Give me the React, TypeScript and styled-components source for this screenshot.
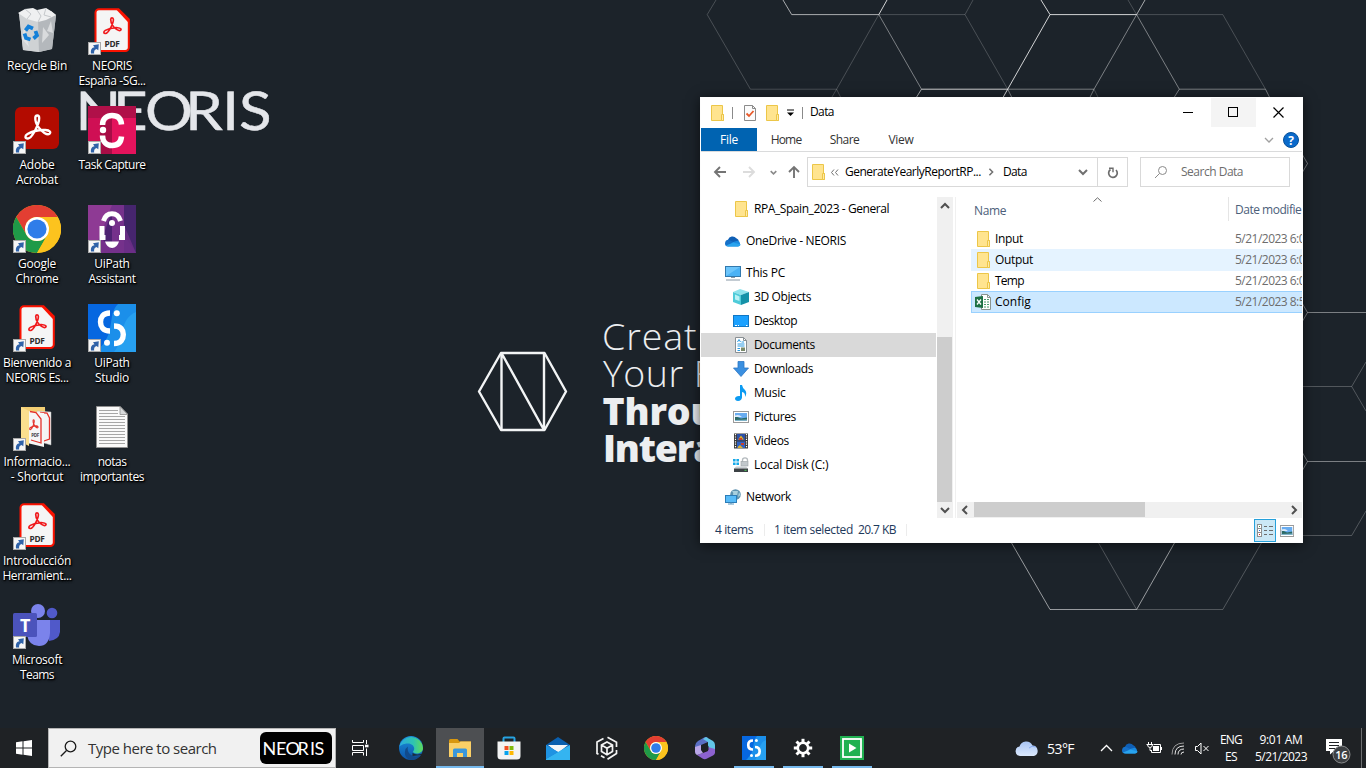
import React from "react";
import styled, { createGlobalStyle, css } from "styled-components";

/* ---------- base ---------- */

const GlobalStyle = createGlobalStyle`
  * { box-sizing: border-box; }
  body { margin: 0; background: #1c232a; overflow: hidden; }
  svg { display: block; flex: none; }
`;

const Screen = styled.main`
  position: relative;
  display: flex;
  flex-direction: column;
  justify-content: space-between;
  width: 1366px;
  height: 768px;
  overflow: hidden;
  background: #1c232a;
  font-family: "Open Sans", "Noto Sans", sans-serif;
  font-size: 12px;
  line-height: 15px;
  letter-spacing: -0.36px;
  color: #000;
`;

const Text = styled.span<{ $ls?: number }>`
  white-space: nowrap;
  letter-spacing: ${(p) => p.$ls ?? -0.38}px;
`;

/* ---------- wallpaper ---------- */

const WallpaperArt = styled.svg`
  position: absolute;
  inset: 0;
`;

const wallpaperLines: { d: string; o: number }[] = [
  { o: 0.2, d: "M716 0 707.2 14.6 750.4 89.2H836.6L878.8 14.6M973 0 965 14.6 1007.7 89.2M1128 0 1136.6 14.6H1222.8L1265.5 89.2M836.6 89.2l4 8M1094 89.2l4 8M878.8 14.6H965M836.6 89.2 832 97" },
  { o: 0.42, d: "M878.8 14.6 921.5 89.2M1136.6 14.6 1094 89.2M1136.6 14.6 1179.3 89.2M1007.7 89.2H1094M1179.3 89.2H1265.5l4 8M1007.7 89.2l4 8M1179.3 89.2l-5 8M1094 89.2l-4 8" },
  { o: 0.62, d: "M783 0 791.7 14.6H878.8M1145 0 1136.6 14.6M921.5 89.2l-5 8" },
  { o: 0.8, d: "M887 0 878.8 14.6M1041 0 1050 14.6H1136.6M1050 14.6 1007.7 89.2H921.5M1007.7 89.2l-4.500 8" },
  { o: 0.42, d: "M1302 154 1307.500 163.500 1302 173M1302 303 1307.500 312.500H1366M1307.500 312.500 1302 322M1302 452 1307.500 461.500H1366M1307.500 461.500 1302 471" },
  { o: 0.24, d: "M1302 386.500H1351.700L1366 362M1351.700 386.500 1366 411M1302 535.500H1351.700L1366 511M1098 542 1136.600 609.500M1262 542 1222.800 609.500H1136.600" },
  { o: 0.55, d: "M1011 542 1050 609.500H1136.600L1175 542" },
];

const Wallpaper = () => (
  <WallpaperArt width="1366" height="768" viewBox="0 0 1366 768">
    <g fill="none" stroke="#fff" strokeWidth="1">
      {wallpaperLines.map((l, i) => (
        <path key={i} d={l.d} strokeOpacity={l.o} />
      ))}
    </g>
    <g fill="none" stroke="#f2f4f5" strokeWidth="2.400" strokeLinejoin="round">
      <path d="M501 353H544.500L566 391.500 544.500 430H501L479 391.500Z" />
      <path d="M501.500 353V430M544 353V430M501.500 353 544 430" />
    </g>
    <g fill="#e4e6ea" stroke="#e4e6ea" strokeWidth=".5" fontFamily="Lato, sans-serif" fontSize="53.500" transform="scale(1.120 1)">
      <text y="130" x="67.500 101 129.500 165.500 198.500 213.500" textRendering="geometricPrecision">NEORIS</text>
    </g>
    <g fill="#eceef0" fontFamily="'Open Sans', sans-serif" fontSize="37.500">
      <text x="602" y="349.500" fontWeight="300" letterSpacing="0.900">Creat</text>
      <text x="603" y="386.500" fontWeight="300" letterSpacing="0.500">Your F</text>
      <text x="602.500" y="424.500" fontWeight="800" letterSpacing="-0.200">Throu</text>
      <text x="603" y="461.500" fontWeight="800" letterSpacing="-1.200">Intera</text>
    </g>
  </WallpaperArt>
);

/* ---------- desktop icons ---------- */

const IconGrid = styled.section`
  position: relative;
  display: grid;
  grid-auto-flow: column;
  grid-template-rows: repeat(7, 99px);
  grid-auto-columns: 74px;
  column-gap: 1px;
  width: 160px;
  padding-top: 7px;
`;

const Shortcut = styled.div`
  display: flex;
  flex-direction: column;
  align-items: center;
  gap: 3px;
`;

const Picture = styled.div`
  position: relative;
  width: 48px;
  height: 48px;
`;

const ArrowBadge = styled.svg`
  position: absolute;
  left: 0;
  bottom: 0;
`;

const Caption = styled.div`
  display: flex;
  flex-direction: column;
  align-items: center;
  color: #fff;
  text-shadow: 1px 1px 1px #000, 0 1px 2px #000, 1px 1px 3px rgba(0, 0, 0, 0.8);
`;

const Trefoil = ({ color, width }: { color: string; width: number }) => (
  <g fill="none" stroke={color} strokeWidth={width} strokeLinejoin="round" strokeLinecap="round">
    <path d="M3.800 21.200C1 21.300 1 18.700 3.400 17.300C8 14.800 13.500 13.700 18.500 14C22.500 14.300 23.500 16 22 17.200C20 18.700 15.500 15.500 13 12C10.800 9 9.800 6 10 3.500C10.300 1 13.200 1 13.300 3.800C13.400 7 11.500 11.200 9.600 14.800C7.500 18.600 5.400 21.100 3.800 21.200Z" />
  </g>
);

const PdfIcon = () => (
  <svg width="48" height="48">
    <path d="M11 2.200H30.500L40.800 12.500V40.500a3.500 3.500 0 0 1-3.500 3.500H11a3.500 3.500 0 0 1-3.500-3.500V5.700a3.500 3.500 0 0 1 3.500-3.500Z" fill="#f5f5f5" stroke="#fa1200" strokeWidth="2" />
    <path d="M30 2.200 40.800 13V16L28 2.200Z" fill="#fa1200" />
    <g transform="translate(14.500 9.500) scale(.82 .8)">
      <Trefoil color="#f0191c" width={2} />
    </g>
    <text x="24" y="39.500" fontFamily="Open Sans" fontWeight="700" fontSize="9.500" textLength="15" lengthAdjust="spacingAndGlyphs" textAnchor="middle" fill="#2c2c2c">PDF</text>
  </svg>
);

const AcrobatIcon = () => (
  <svg width="48" height="48">
    <rect x="2" y="1" width="44" height="42" rx="6" fill="#b30b00" />
    <g transform="translate(10.500 7.500) scale(1.180 1.180)">
      <Trefoil color="#fff" width={2} />
    </g>
  </svg>
);

const RecycleIcon = () => (
  <svg width="48" height="48">
    <path d="M6 6 10 43 26 45 39 42 43 8 38 4 10 4Z" fill="#c9cccf" />
    <path d="M6 6 10 43 26 45 25 10Z" fill="#cfd2d4" />
    <path d="M25 10 26 45 39 42 43 8Z" fill="#b4b8bc" />
    <path d="M5 6 12 2 20 1 24 3 33 1 38 4 43 8 33 13 25 15 14 12Z" fill="#eff0f1" />
    <path d="M12 2 18 7 14 12M24 3 28 9 25 15M33 1 31 8 38 10" stroke="#c5c8cb" fill="none" />
    <path d="M11 20 9 32 16 40ZM30 20 36 28 29 36ZM38 14 34 24 40 26Z" fill="#e8eaeb" opacity=".7" />
    <g fill="none" stroke="#1480d8" strokeWidth="3.800">
      <path d="M12.500 23.500 15.500 19.500 20 21.500" />
      <path d="M22.500 24 24 28.500 20.500 31.500" />
      <path d="M17.500 32.500 13 31 11.500 26.500" />
    </g>
  </svg>
);

const ChromeIcon = ({ size }: { size: number }) => (
  <svg width={size} height={size} viewBox="0 0 48 48">
    <circle cx="24" cy="24" r="24" fill="#fbbd0b" />
    <path d="M3.200 12A24 24 0 0 1 44.800 12H24A12 12 0 0 0 13.600 30Z" fill="#e33e32" />
    <path d="M3.200 12 13.600 30A12 12 0 0 0 34.400 30L24 48A24 24 0 0 1 3.200 12Z" fill="#1f9a48" />
    <path d="M34.400 30 24 48A24 24 0 0 0 44.800 12H24A12 12 0 0 1 34.400 30Z" fill="#fcc31e" />
    <circle cx="24" cy="24" r="12" fill="#fff" />
    <circle cx="24" cy="24" r="9.600" fill="#2f7de9" />
  </svg>
);

const TaskCaptureIcon = () => (
  <svg width="48" height="48">
    <rect width="48" height="48" fill="#e4135c" />
    <path d="M0 12H24V48H0Z" fill="#cf0f54" />
    <path d="M24 12 12 20V48H24Z" fill="#a80d46" />
    <rect width="48" height="12" fill="#b01049" />
    <g fill="none" stroke="#fff" strokeWidth="5.500">
      <path d="M14.500 19C14.500 12.500 19 9.500 24 9.500S33 12 33.500 18.500" />
      <path d="M14.500 29.500C14.500 36 19 39.500 24 39.500S33 37 33.500 30.500" />
    </g>
    <circle cx="15" cy="24" r="3.200" fill="#fff" />
  </svg>
);

const AssistantIcon = () => (
  <svg width="48" height="48">
    <rect width="48" height="48" fill="#8e3a94" />
    <path d="M36 0H48V48H36Z" fill="#5a2b80" />
    <path d="M48 0V48L36 30V0Z" fill="#3d2466" opacity=".7" />
    <path d="M24 0 10 36V48H48L36 20V0Z" fill="#6f2f88" opacity=".8" />
    <path d="M24 6 14 34 24 44Z" fill="#4d2272" />
    <g fill="none" stroke="#fff" strokeWidth="5">
      <path d="M15.500 16C17 11 20 8.800 24 8.800S31 11 32.500 16" />
      <path d="M14 21V32.500H17.500M34.500 21V32.500H31" />
    </g>
    <path d="M17 36.500H31Q29 43 24 43T17 36.500Z" fill="#fff" />
    <circle cx="24" cy="18" r="3" fill="#fff" />
  </svg>
);

const StudioIcon = ({ size }: { size: number }) => (
  <svg width={size} height={size} viewBox="0 0 48 48">
    <rect width="48" height="48" fill="#0667e0" />
    <path d="M48 0H30C18 12 30 28 8 48H48Z" fill="#1b8fea" />
    <path d="M48 8C30 16 38 34 26 48H48Z" fill="#27a0f0" />
    <g fill="none" stroke="#fff" strokeWidth="5.400">
      <path d="M22 9C15 9 12.500 13.500 12.500 18S15 27 22 27" />
      <path d="M26 22C33 22 35.300 26 35.300 30.500S33 39.500 26 39.500" />
    </g>
    <circle cx="28.800" cy="9.200" r="3" fill="#fff" />
    <circle cx="19" cy="38.800" r="3" fill="#fff" />
  </svg>
);

const PdfFolderIcon = () => (
  <svg width="48" height="48">
    <path d="M8 4H32L33 40H8Z" fill="#f3cf74" />
    <path d="M24 8 38 9V42L24 38Z" fill="#f4f4f4" stroke="#bbb" strokeWidth=".5" />
    <path d="M27 9.500 34 10 36.500 15V36L28 39" fill="none" stroke="#e4322b" strokeWidth="1.300" />
    <path d="M14 8 31 10V44L14 40Z" fill="#f6f6f6" />
    <path d="M17 8.500 23 9.500 28 16V40L18 37" fill="none" stroke="#e4322b" strokeWidth="1.300" />
    <g transform="translate(16 16) scale(.4 .5)">
      <Trefoil color="#e4322b" width={2.600} />
    </g>
    <text x="22" y="34" fontFamily="Open Sans" fontSize="4.500" fontWeight="700" textAnchor="middle" fill="#444">PDF</text>
    <path d="M8 4 16 8V43L8 39Z" fill="#fbdf8e" />
  </svg>
);

const NotesIcon = () => (
  <svg width="48" height="48">
    <path d="M8.500 3.500H32L39.500 11V44.500H8.500Z" fill="#fafafa" stroke="#8f8f8f" />
    <path d="M32 3.500V11.500H39.500Z" fill="#d8dadb" stroke="#8f8f8f" strokeWidth=".8" />
    <path d="M11 7.500H30M11 10.500H30M11 13.500H37M11 16.500H37M11 19.500H37M11 22.500H37M11 25.500H37M11 28.500H37M11 31.500H37M11 34.500H37M11 37.500H37M11 40.500H37" stroke="#a6a6a6" />
  </svg>
);

const TeamsIcon = () => (
  <svg width="48" height="48">
    <circle cx="39" cy="12" r="5.300" fill="#5059c9" />
    <path d="M34 19H47V31Q46 39 36 40Z" fill="#5059c9" />
    <circle cx="25" cy="10" r="7" fill="#7b83eb" />
    <path d="M15 19H37V32Q36 45 26 45T14 34Z" fill="#7b83eb" />
    <rect x="0" y="12" width="24" height="24" rx="1.500" fill="#4b53bc" />
    <text x="12" y="30.500" fontFamily="Open Sans" fontSize="18" fontWeight="700" textAnchor="middle" fill="#fff">T</text>
  </svg>
);

type Item = { icon: React.ReactNode; lines: [string, number][]; plain?: boolean };

const desktopItems: Item[] = [
  { icon: <RecycleIcon />, lines: [["Recycle Bin", -0.24]], plain: true },
  { icon: <AcrobatIcon />, lines: [["Adobe", -0.2], ["Acrobat", -0.22]] },
  { icon: <ChromeIcon size={48} />, lines: [["Google", -0.24], ["Chrome", -0.3]] },
  { icon: <PdfIcon />, lines: [["Bienvenido a", -0.36], ["NEORIS Es...", -0.36]] },
  { icon: <PdfFolderIcon />, lines: [["Informacio...", -0.24], ["- Shortcut", -0.22]] },
  { icon: <PdfIcon />, lines: [["Introducción", -0.24], ["Herramient...", -0.37]] },
  { icon: <TeamsIcon />, lines: [["Microsoft", -0.3], ["Teams", -0.6]] },
  { icon: <PdfIcon />, lines: [["NEORIS", -0.4], ["España -SG...", -0.4]] },
  { icon: <TaskCaptureIcon />, lines: [["Task Capture", -0.52]] },
  { icon: <AssistantIcon />, lines: [["UiPath", -0.34], ["Assistant", -0.36]] },
  { icon: <StudioIcon size={48} />, lines: [["UiPath", -0.34], ["Studio", -0.3]] },
  { icon: <NotesIcon />, lines: [["notas", -0.5], ["importantes", -0.42]], plain: true },
];

const DesktopIcons = () => (
  <IconGrid>
    {desktopItems.map((it, i) => (
      <Shortcut key={i}>
        <Picture>
          {it.icon}
          {!it.plain && (
            <ArrowBadge width="13" height="13">
              <rect x=".5" y=".5" width="12" height="12" fill="#f6f6f6" stroke="#a9a9a9" />
              <path d="M3 11.500C2.500 7.500 4 5.500 6.500 5.300L5 3.200 10.800 2.200 10.300 8.200 8.500 6.900C6.300 7.700 5.800 9.500 6.200 11.500Z" fill="#2f62a8" />
            </ArrowBadge>
          )}
        </Picture>
        <Caption>
          {it.lines.map(([t, ls]) => (
            <Text key={t} $ls={ls}>{t}</Text>
          ))}
        </Caption>
      </Shortcut>
    ))}
  </IconGrid>
);

/* ---------- explorer window ---------- */

const Window = styled.section`
  position: absolute;
  left: 700px;
  top: 97px;
  display: flex;
  flex-direction: column;
  width: 603px;
  height: 446px;
  border: 1px solid #fdfdfd;
  background: #fff;
  box-shadow: 0 2px 12px rgba(0, 0, 0, 0.6);

  ${Text} {
    padding-bottom: 2px;
  }
`;

const TitleBar = styled.header`
  display: flex;
  justify-content: space-between;
  height: 30px;
`;

const QuickAccess = styled.div`
  display: flex;
  align-items: center;
  height: 29px;
  padding-left: 8px;
`;

const Separator = styled.i<{ $tall?: number; $color?: string; $gap?: string }>`
  width: 1px;
  height: ${(p) => p.$tall ?? 12}px;
  margin: ${(p) => p.$gap ?? "0"};
  background: ${(p) => p.$color ?? "#8a8a8a"};
`;

const WindowButtons = styled.div`
  display: flex;
  padding-right: 1px;
`;

const WindowButton = styled.button<{ $lit?: boolean }>`
  display: flex;
  align-items: center;
  justify-content: center;
  width: 45px;
  height: 29px;
  padding: 0 1px 1px 0;
  border: 0;
  background: ${(p) => (p.$lit ? "#f4f4f4" : "transparent")};
`;

const RibbonTabs = styled.nav`
  display: flex;
  align-items: stretch;
  height: 24px;
  border-bottom: 1px solid #dadbdc;
`;

const Tab = styled.div<{ $active?: boolean; $width: number }>`
  display: flex;
  align-items: center;
  justify-content: center;
  width: ${(p) => p.$width}px;
  padding-top: 2px;
  color: #333;
  ${(p) => p.$active && css`background: #0063b1; color: #fff;`}
`;

const RibbonTools = styled.div`
  display: flex;
  align-items: center;
  gap: 9px;
  margin-left: auto;
  padding-right: 3px;
`;

const NavRow = styled.div`
  display: flex;
  height: 45px;
  padding: 5px 12px 10px 11px;
`;

const NavButtons = styled.div`
  display: flex;
  align-items: center;
  width: 95px;
`;

const Field = styled.div`
  display: flex;
  align-items: center;
  border: 1px solid #d9d9d9;
  background: #fff;
`;

const AddressBar = styled(Field)`
  width: 321px;
  padding-left: 2px;
`;

const RefreshCell = styled.div`
  display: flex;
  align-items: center;
  justify-content: center;
  width: 30px;
  height: 100%;
  border-left: 1px solid #d9d9d9;
`;

const AddressTrail = styled.div`
  display: flex;
  align-items: center;
  flex: 1;
`;

const SearchField = styled(Field)`
  width: 150px;
  margin-left: 12px;
  padding-left: 13px;
  gap: 13px;
  color: #6d6d6d;
`;

const Body = styled.div`
  display: flex;
  height: 321px;
`;

const Tree = styled.ul`
  width: 235px;
  margin: 0;
  padding: 0;
  list-style: none;
`;

const TreeRow = styled.li<{ $level: number; $active?: boolean; $spaced?: boolean }>`
  display: flex;
  align-items: center;
  gap: 5px;
  height: 24px;
  margin-top: ${(p) => (p.$spaced ? 8 : 0)}px;
  padding-left: ${(p) => (p.$level ? 32 : 24)}px;
  background: ${(p) => (p.$active ? "#d9d9d9" : "transparent")};
`;

const VScroll = styled.div`
  display: flex;
  flex-direction: column;
  justify-content: space-between;
  width: 16px;
  margin-left: 1px;
  padding-top: 1px;
  background: #f0f0f0;
`;

const ScrollArrow = styled.div`
  display: flex;
  align-items: center;
  justify-content: center;
  width: 16px;
  height: 16px;
  padding-right: 1px;
`;

const VThumb = styled.div`
  width: 15px;
  height: 165px;
  margin-top: auto;
  background: #cdcdcd;
`;

const FilePane = styled.div`
  display: flex;
  flex-direction: column;
  flex: 1;
  min-width: 0;
  margin-left: 2px;
  border-left: 1px solid #f0f0f0;
`;

const Columns = styled.div`
  display: flex;
  height: 25px;
  margin-bottom: 6px;
  color: #4c607a;
`;

const NameColumn = styled.div`
  display: flex;
  align-items: center;
  width: 273px;
  height: 24px;
  padding-left: 18px;
  border-right: 1px solid #e5e5e5;

  ${Text} {
    padding: 2px 0 0;
  }
`;

const SortMark = styled.svg`
  align-self: flex-start;
  margin-left: 87px;
`;

const DateColumn = styled.div`
  display: flex;
  align-items: center;
  flex: 1;
  min-width: 0;
  padding: 2px 0 0 6px;
  overflow: hidden;
`;

const FileRow = styled.div<{ $state?: "hover" | "selected" }>`
  display: flex;
  align-items: center;
  height: 22px;
  margin: 0 0 -1px 15px;
  padding-left: 3px;
  overflow: hidden;
  border: 1px solid transparent;
  border-right: 0;
  ${(p) => p.$state === "hover" && css`background: #e5f3ff; border-color: #e5f3ff;`}
  ${(p) => p.$state === "selected" && css`background: #cce8ff; border-color: #99d1ff;`}
`;

const FileName = styled.div`
  display: flex;
  flex: none;
  align-items: center;
  gap: 4px;
  width: 260px;
`;

const FileDate = styled(Text)`
  color: #6d6d6d;
`;

const HScroll = styled.div`
  display: flex;
  align-items: flex-start;
  height: 16px;
  margin: auto 0 0 1px;
  background: #f0f0f0;
`;

const HThumb = styled.div`
  width: 171px;
  height: 15px;
  margin-left: 1px;
  margin-right: auto;
  background: #cdcdcd;
`;

const StatusBar = styled.footer`
  display: flex;
  align-items: center;
  height: 24px;
  padding-left: 14px;
  color: #1e395b;

  ${Text} {
    padding-top: 1px;
  }
`;

const ViewButtons = styled.div`
  display: flex;
  margin-left: auto;
  padding: 1px 4px 0 0;
`;

const ViewButton = styled.div<{ $active?: boolean }>`
  display: flex;
  align-items: center;
  justify-content: center;
  width: 22px;
  height: 23px;
  border: 1px solid ${(p) => (p.$active ? "#26a0da" : "transparent")};
  background: ${(p) => (p.$active ? "#cbe8f6" : "transparent")};
`;

const FolderIcon = () => (
  <svg width="16" height="16">
    <path d="M2.500.5H13.500V9.500H14.500V15.500H2.500Z" fill="#ffe48f" stroke="#ecc648" />
    <path d="M12.500 9.500H14.500V15.500H12.500Z" fill="#ffeaa6" stroke="#ecc648" />
  </svg>
);

const CheckDocIcon = () => (
  <svg width="16" height="18">
    <path d="M2.500 1.500H10.500L13.500 4.500V16.500H2.500Z" fill="#fbfbfb" stroke="#8b8b8b" />
    <path d="M10.500 1.500V4.500H13.500" fill="none" stroke="#8b8b8b" />
    <path d="M4.500 9.500 7 12 11.500 7" fill="none" stroke="#e8592a" strokeWidth="1.800" />
  </svg>
);

const CloudIcon = () => (
  <svg width="16" height="16">
    <path d="M3.500 12.500A3.300 3.300 0 0 1 3 6.800 4.800 4.800 0 0 1 11.300 5.300 4 4 0 0 1 14 8.500Z" fill="#0f5fb5" />
    <path d="M0 10.500Q0 7 3.500 6.800L10 9.800 3 13.500Q0 13.500 0 10.500Z" fill="#1570c8" />
    <path d="M8 9 12.500 7.800A3 3 0 0 1 13.300 13.500H3Z" fill="#1a8ae0" />
    <path d="M1 12.500 8.500 9.500 15.800 11.500Q15 13.500 13 13.500H3.500Q2 13.500 1 12.500Z" fill="#28a3ee" />
  </svg>
);

const PcIcon = () => (
  <svg width="16" height="16">
    <rect x=".5" y="1.500" width="15" height="10" fill="#6cc5fb" stroke="#3279ad" />
    <path d="M1 11 15 2V11Z" fill="#4bb2f5" />
    <path d="M6 12.500H10M1 15H15" stroke="#8798a6" strokeWidth="1.200" />
  </svg>
);

const CubeIcon = () => (
  <svg width="16" height="16">
    <path d="M0 3 7 0 16 3 8 6Z" fill="#8fe3ec" />
    <path d="M0 3 8 6V16L0 13Z" fill="#4fcbd9" />
    <path d="M16 3 8 6V16L16 13Z" fill="#1592a8" />
    <path d="M2 5.500 6.500 7.500V12L2 10.500Z" fill="#b9f2f5" />
  </svg>
);

const DesktopIcon = () => (
  <svg width="16" height="16">
    <rect x=".5" y="2.500" width="15" height="11" fill="#1ba1ff" stroke="#1077c5" />
    <path d="M2 12.500H4M5 12.500H6M13 12.500H14.500" stroke="#fff" />
  </svg>
);

const DocumentIcon = () => (
  <svg width="16" height="16">
    <path d="M2.500.5H10.500L13.500 3.500V15.500H2.500Z" fill="#fff" stroke="#898f93" />
    <path d="M10.500.5V3.500H13.500" fill="none" stroke="#898f93" />
    <path d="M4.500 5 6 2.500 7.500 5M8.500 5H11M4.500 7H11.500M4.500 9H11.500" fill="none" stroke="#2c9be2" />
    <path d="M4.500 11.500H7M4.500 13.500H7" stroke="#2c9be2" />
    <rect x="8" y="10.500" width="4" height="3.500" fill="#7b8a6a" />
  </svg>
);

const DownloadIcon = () => (
  <svg width="16" height="16">
    <path d="M5 .5H11V7H15.500L8 15.500.5 7H5Z" fill="#3a8fe0" stroke="#2b76c4" strokeWidth=".8" />
  </svg>
);

const MusicIcon = () => (
  <svg width="16" height="16">
    <path d="M7 0H9Q9.500 3 12 5Q14.500 8 12 12Q12.500 7.500 9 7V12.500Q8.500 15.800 5 16Q2 15.800 2 13.500Q2.500 10.500 7 11Z" fill="#0c9bf2" />
  </svg>
);

const PicturesIcon = ({ width = 16 }: { width?: number }) => (
  <svg width={width} height="16" viewBox="0 0 16 16" preserveAspectRatio="none">
    <rect x=".5" y="2.500" width="15" height="11" fill="#fff" stroke="#9a9a9a" />
    <rect x="2" y="4" width="12" height="8" fill="#68acf0" />
    <path d="M2 7 8 9.500 14 8.500V12H2Z" fill="#2c6a66" />
    <path d="M2 6.500Q6 5 9 8L2 8Z" fill="#dceafa" />
    <path d="M2 11 14 10.500V12H2Z" fill="#7fb3c8" />
  </svg>
);

const VideosIcon = () => (
  <svg width="16" height="16">
    <rect x="1" y=".5" width="14" height="15" fill="#3a3a3a" />
    <path d="M2.500 1V15.500M13.500 1V15.500" stroke="#fff" strokeWidth="1.200" strokeDasharray="1.200 1.200" />
    <rect x="4" y="1" width="8" height="6.500" fill="#2c50a8" />
    <rect x="4" y="8.500" width="8" height="6.500" fill="#2f62c4" />
    <path d="M5 6.500 8 2.500 11 6.500Z" fill="#e0b127" />
    <path d="M6 5H9V7H6ZM8 10H11V12H8Z" fill="#c8402d" />
    <path d="M4.500 14 7 12 10 15H5Z" fill="#e0b127" />
  </svg>
);

const DiskIcon = () => (
  <svg width="16" height="16">
    <path d="M0 2H2.600V4.600H0ZM3.400 2H6V4.600H3.400ZM0 5.400H2.600V8H0ZM3.400 5.400H6V8H3.400Z" fill="#18a9e8" />
    <path d="M9.500 5V3Q9.500.8 12 .8T14.500 3V4" fill="none" stroke="#b4babe" strokeWidth="1.300" />
    <rect x="8" y="4.500" width="7" height="4.500" fill="#c2c8cc" stroke="#9aa0a4" strokeWidth=".6" />
    <path d="M3 9.500H13L15 11.500H1Z" fill="#c9ced2" />
    <rect x="1" y="11.500" width="14" height="3.500" fill="#3c4145" />
    <path d="M11.500 13.300H13.500" stroke="#4fd35b" />
  </svg>
);

const NetworkIcon = () => (
  <svg width="16" height="16">
    <circle cx="10.500" cy="5.500" r="5.300" fill="#5f93b0" />
    <path d="M7 2Q9 4 8 6L12 7 13 2ZM13 8 15.500 6 14 3Z" fill="#a9d0de" />
    <rect x=".5" y="6.500" width="11" height="7" fill="#58bbf8" stroke="#2c7db8" />
    <path d="M3 15H9M6 13.500V15" stroke="#5c97bd" />
  </svg>
);

const ExcelIcon = () => (
  <svg width="16" height="16">
    <path d="M6.500.5H12.500L15.500 3.500V15.500H6.500Z" fill="#fff" stroke="#8a9490" />
    <path d="M12.500.5V3.500H15.500" fill="none" stroke="#8a9490" />
    <path d="M9 5.500H11M12 5.500H14M9 8H11M12 8H14M9 10.500H11M12 10.500H14M9 13H11M12 13H14" stroke="#4a9a6c" />
    <path d="M0 3 8 2V14L0 13Z" fill="#1e7145" />
    <path d="M2 5.500 6 10.500M6 5.500 2 10.500" stroke="#fff" strokeWidth="1.300" />
  </svg>
);

const Chevron = ({ dir, color = "#505050", size = 10, weight = 2 }: { dir: "up" | "down" | "left" | "right"; color?: string; size?: number; weight?: number }) => {
  const d = { up: "M1 7 5 3 9 7", down: "M1 3 5 7 9 3", left: "M7 1 3 5 7 9", right: "M3 1 7 5 3 9" }[dir];
  return (
    <svg width={size} height={size} viewBox="0 0 10 10">
      <path d={d} fill="none" stroke={color} strokeWidth={weight} />
    </svg>
  );
};

const treeItems: { text: string; icon: React.ReactNode; level: number; ls: number; spaced?: boolean; active?: boolean }[] = [
  { text: "RPA_Spain_2023 - General", icon: <FolderIcon />, level: 1, ls: -0.43 },
  { text: "OneDrive - NEORIS", icon: <CloudIcon />, level: 0, ls: -0.31, spaced: true },
  { text: "This PC", icon: <PcIcon />, level: 0, ls: -0.23, spaced: true },
  { text: "3D Objects", icon: <CubeIcon />, level: 1, ls: -0.39 },
  { text: "Desktop", icon: <DesktopIcon />, level: 1, ls: -0.47 },
  { text: "Documents", icon: <DocumentIcon />, level: 1, ls: -0.38, active: true },
  { text: "Downloads", icon: <DownloadIcon />, level: 1, ls: -0.4 },
  { text: "Music", icon: <MusicIcon />, level: 1, ls: -0.2 },
  { text: "Pictures", icon: <PicturesIcon />, level: 1, ls: -0.39 },
  { text: "Videos", icon: <VideosIcon />, level: 1, ls: -0.4 },
  { text: "Local Disk (C:)", icon: <DiskIcon />, level: 1, ls: -0.15 },
  { text: "Network", icon: <NetworkIcon />, level: 0, ls: -0.4, spaced: true },
];

const files: { name: string; date: string; icon: React.ReactNode; ls: number; state?: "hover" | "selected" }[] = [
  { name: "Input", date: "5/21/2023 6:0", icon: <FolderIcon />, ls: -0.34 },
  { name: "Output", date: "5/21/2023 6:0", icon: <FolderIcon />, ls: -0.34, state: "hover" },
  { name: "Temp", date: "5/21/2023 6:0", icon: <FolderIcon />, ls: -0.75 },
  { name: "Config", date: "5/21/2023 8:5", icon: <ExcelIcon />, ls: 0, state: "selected" },
];

const CustomizeMark = styled.svg`
  margin-left: 6px;
`;

const Slot = styled.div<{ $before?: number }>`
  display: flex;
  margin-left: ${(p) => p.$before ?? 0}px;
`;

const Explorer = () => (
  <Window>
    <TitleBar>
      <QuickAccess>
        <FolderIcon />
        <Separator $gap="0 9px 0 7px" />
        <CheckDocIcon />
        <Slot $before={6}><FolderIcon /></Slot>
        <CustomizeMark width="9" height="9">
          <path d="M1 2H8" stroke="#000" />
          <path d="M1 4.500H8L4.500 8Z" fill="#000" />
        </CustomizeMark>
        <Separator $gap="0 7px 0 7px" />
        <Text $ls={-0.6}>Data</Text>
      </QuickAccess>
      <WindowButtons>
        <WindowButton>
          <svg width="10" height="10"><path d="M0 5.500H10" stroke="#000" /></svg>
        </WindowButton>
        <WindowButton $lit>
          <svg width="10" height="10"><rect x=".5" y=".5" width="9" height="9" fill="none" stroke="#000" /></svg>
        </WindowButton>
        <WindowButton>
          <svg width="11" height="11"><path d="M.5.5 10.500 10.500M10.500.5.5 10.500" stroke="#000" strokeWidth="1.200" /></svg>
        </WindowButton>
      </WindowButtons>
    </TitleBar>

    <RibbonTabs>
      <Tab $active $width={56}><Text $ls={-0.3}>File</Text></Tab>
      <Tab $width={58}><Text $ls={-0.8}>Home</Text></Tab>
      <Tab $width={59}><Text $ls={-0.6}>Share</Text></Tab>
      <Tab $width={54}><Text $ls={-0.3}>View</Text></Tab>
      <RibbonTools>
        <Chevron dir="down" color="#a0a0a0" weight={1.3} />
        <svg width="16" height="16">
          <circle cx="8" cy="8" r="7.500" fill="#0a6acb" stroke="#075099" />
          <text x="8" y="12.500" fontSize="12" fontWeight="700" textAnchor="middle" fill="#fff">?</text>
        </svg>
      </RibbonTools>
    </RibbonTabs>

    <NavRow>
      <NavButtons>
        <svg width="16" height="14"><path d="M14 7H3M8 2 3 7 8 12" fill="none" stroke="#747474" strokeWidth="1.900" /></svg>
        <Slot $before={14}>
          <svg width="16" height="14"><path d="M1 7H12M7 2 12 7 7 12" fill="none" stroke="#dcdcdc" strokeWidth="1.900" /></svg>
        </Slot>
        <Slot $before={12}><Chevron dir="down" color="#8a8a8a" size={7} weight={2.2} /></Slot>
        <Slot $before={10}>
          <svg width="14" height="14"><path d="M7 13V2M2 7 7 2 12 7" fill="none" stroke="#747474" strokeWidth="1.900" /></svg>
        </Slot>
      </NavButtons>
      <AddressBar>
        <AddressTrail>
          <FolderIcon />
          <Slot $before={4}>
            <svg width="9" height="9"><path d="M4 1.500 1.500 4.500 4 7.500M8 1.500 5.500 4.500 8 7.500" fill="none" stroke="#707070" /></svg>
          </Slot>
          <Slot $before={6}><Text $ls={-0.49}>GenerateYearlyReportRP...</Text></Slot>
          <Slot $before={6}><Chevron dir="right" color="#707070" size={8} weight={1.9} /></Slot>
          <Slot $before={8}><Text $ls={-0.6}>Data</Text></Slot>
          <Slot $before={51}><Chevron dir="down" color="#707070" size={10} /></Slot>
        </AddressTrail>
        <RefreshCell>
          <svg width="12" height="13" viewBox="0 0 12 13">
            <path d="M3.500 3.500A4.300 4.300 0 1 0 9 4" fill="none" stroke="#6c6c6c" strokeWidth="1.700" />
            <path d="M2 2.200H6V6.200" fill="none" stroke="#6c6c6c" strokeWidth="1.400" />
          </svg>
        </RefreshCell>
      </AddressBar>
      <SearchField>
        <svg width="14" height="14"><circle cx="8.500" cy="5.500" r="4" fill="none" stroke="#8a8a8a" /><path d="M5.500 8.500 1 13" stroke="#8a8a8a" /></svg>
        <Text $ls={-0.49}>Search Data</Text>
      </SearchField>
    </NavRow>

    <Body>
      <Tree>
        {treeItems.map((t) => (
          <TreeRow key={t.text} $level={t.level} $active={t.active} $spaced={t.spaced}>
            {t.icon}
            <Text $ls={t.ls}>{t.text}</Text>
          </TreeRow>
        ))}
      </Tree>
      <VScroll>
        <ScrollArrow><Chevron dir="up" /></ScrollArrow>
        <VThumb />
        <ScrollArrow><Chevron dir="down" /></ScrollArrow>
      </VScroll>
      <FilePane>
        <Columns>
          <NameColumn>
            <Text $ls={-0.39}>Name</Text>
            <SortMark width="9" height="6"><path d="M.5 4.500 4.500.8 8.500 4.500" fill="none" stroke="#6b6b6b" /></SortMark>
          </NameColumn>
          <DateColumn><Text $ls={-0.48}>Date modifie</Text></DateColumn>
        </Columns>
        {files.map((f) => (
          <FileRow key={f.name} $state={f.state}>
            <FileName>
              {f.icon}
              <Text $ls={f.ls}>{f.name}</Text>
            </FileName>
            <FileDate $ls={-0.52}>{f.date}</FileDate>
          </FileRow>
        ))}
        <HScroll>
          <ScrollArrow><Chevron dir="left" /></ScrollArrow>
          <HThumb />
          <ScrollArrow><Chevron dir="right" /></ScrollArrow>
        </HScroll>
      </FilePane>
    </Body>

    <StatusBar>
      <Text $ls={-0.41}>4 items</Text>
      <Separator $gap="0 9px 0 11px" $color="#ececec" />
      <Text $ls={-0.38}>1 item selected</Text>
      <Slot $before={5}><Text $ls={-0.55}>20.7 KB</Text></Slot>
      <Separator $gap="0 0 0 10px" $color="#ececec" />
      <ViewButtons>
        <ViewButton $active>
          <svg width="18" height="15">
            <rect x="1.500" y="1.500" width="4" height="12" fill="#fff" stroke="#8f8f8f" />
            <path d="M1.500 5.500H5.500M1.500 9.500H5.500" stroke="#8f8f8f" />
            <path d="M8 3.500H11M13 3.500H17M8 7.500H11M13 7.500H17M8 11.500H11M13 11.500H17" stroke="#6c6c6c" />
            <path d="M3 3.500H4" stroke="#3c8a50" />
            <path d="M3 7.500H4" stroke="#2a6ed0" />
            <path d="M3 11.500H4" stroke="#d22" />
          </svg>
        </ViewButton>
        <ViewButton><PicturesIcon width={14} /></ViewButton>
      </ViewButtons>
    </StatusBar>
  </Window>
);

/* ---------- taskbar ---------- */

const Bar = styled.footer`
  position: relative;
  display: flex;
  height: 40px;
  background: #1f2225;
  color: #fff;
`;

const Tile = styled.div<{ $active?: boolean; $running?: boolean; $gap?: number }>`
  display: flex;
  align-items: center;
  justify-content: center;
  width: 48px;
  margin-right: ${(p) => p.$gap ?? 1}px;
  background: ${(p) =>
    p.$active
      ? "linear-gradient(#76b9ed, #76b9ed) bottom / 48px 2px no-repeat #4d4f52"
      : p.$running
        ? "linear-gradient(#76b9ed, #76b9ed) bottom / 40px 2px no-repeat"
        : "none"};
`;

const SearchBox = styled.div`
  display: flex;
  align-items: center;
  width: 288px;
  padding: 0 3px 0 11px;
  border: 1px solid #b4b4b4;
  background: #f1f1f1;
  color: #333;
  font-size: 15px;
`;

const SearchHint = styled(Text)`
  margin-left: 11px;
  margin-right: auto;
`;

const BrandChip = styled.div`
  display: flex;
  align-items: center;
  justify-content: center;
  width: 72px;
  height: 32px;
  border-radius: 6px;
  background: #000;
`;

const Tray = styled.div`
  display: flex;
  align-items: center;
  margin-left: auto;
`;

const Weather = styled.div`
  display: flex;
  align-items: center;
  gap: 8px;
  margin-right: 20px;
  font-size: 14px;
`;

const TrayIcon = styled.div`
  display: flex;
  align-items: center;
  justify-content: center;
  width: 24px;
`;

const Stack = styled.div<{ $width: number; $before: number }>`
  display: flex;
  flex-direction: column;
  align-items: center;
  gap: 2px;
  width: ${(p) => p.$width}px;
  margin-left: ${(p) => p.$before}px;
  padding-bottom: 1px;
`;

const Notifications = styled.div`
  display: flex;
  padding: 7px 0 0 16px;
  width: 53px;
`;

const ShowDesktop = styled.div`
  width: 5px;
  height: 40px;
  border-left: 1px solid #6d6f71;
`;

const EdgeIcon = () => (
  <svg width="24" height="24" viewBox="0 0 24 24">
    <defs>
      <linearGradient id="edgeTop" x1="0" x2="1"><stop offset="0" stopColor="#2aa9e0" /><stop offset=".6" stopColor="#2fc4b0" /><stop offset="1" stopColor="#5fdb5a" /></linearGradient>
      <linearGradient id="edgeLow" x1="0" x2="0" y2="1"><stop offset="0" stopColor="#1b8fdc" /><stop offset="1" stopColor="#0c54a8" /></linearGradient>
    </defs>
    <circle cx="12" cy="12" r="12" fill="url(#edgeLow)" />
    <path d="M.2 11A12 12 0 0 1 24 12C24 16 20.500 17.500 17.500 17.500 15 17.500 14 16.500 14 15.800 14 15 15.200 14.600 15.200 12.500 15.200 10 12.500 7.500 9 7.500 4 7.500.5 10 .2 11Z" fill="url(#edgeTop)" />
    <path d="M9 10.500C7.500 15 11 20.500 17 20.500 19.500 20.500 21.500 19.500 22.500 18 20 23 15 24 12 24 7 23 5.500 19 6 15.500Q6.500 12 9 10.500Z" fill="#114a8b" />
    <path d="M13.500 17Q17 19.500 22.500 17.800L23 19 13.500 20Z" fill="#1f2225" opacity=".85" />
  </svg>
);

const ExplorerTaskIcon = () => (
  <svg width="22" height="18">
    <path d="M0 1.500Q0 0 1.500 0H8.500L10.500 2.500H22V18H0Z" fill="#d9980f" />
    <path d="M0 4H10L11.500 2.500H22V18H0Z" fill="#fbd067" />
    <path d="M4 18V11Q4 9.500 5.500 9.500H16.500Q18 9.500 18 11V18H14V14H8V18Z" fill="#3a97dc" />
  </svg>
);

const StoreIcon = () => (
  <svg width="24" height="24">
    <path d="M6.500 6V2.500Q6.500 1.500 7.500 1.500H16.500Q17.500 1.500 17.500 2.500V6" fill="none" stroke="#27a3e2" strokeWidth="2" />
    <path d="M.5 5.500H23.500V20Q23.500 23.500 20 23.500H4Q.5 23.500.5 20Z" fill="#f3f3f3" />
    <path d="M7.500 10H11.500V14H7.500Z" fill="#f04f23" />
    <path d="M12.500 10H16.500V14H12.500Z" fill="#80b908" />
    <path d="M7.500 15H11.500V19H7.500Z" fill="#08a3ee" />
    <path d="M12.500 15H16.500V19H12.500Z" fill="#feb801" />
  </svg>
);

const MailIcon = () => (
  <svg width="24" height="24">
    <path d="M0 9 12 1 24 9V16H0Z" fill="#0a5fae" />
    <path d="M2 9H22L12 17Z" fill="#f4f6f8" />
    <path d="M0 9 24 23V24H0Z" fill="#1784d8" />
    <path d="M24 9 0 23V24H24Z" fill="#34b4f0" />
    <path d="M0 9 12 16 0 23Z" fill="#1f93e2" />
  </svg>
);

const CubeHexIcon = () => (
  <svg width="24" height="26" fill="none" stroke="#f4f4f4" strokeWidth="1.700">
    <path d="M12.500 2.200 21.500 7.200V12M21.500 15V18.500L12.500 24.300M9.500 22.800 6 20.800M3.500 19.300 2 18.500V7L8.500 3.400" />
    <path d="M12 7 17.500 10V16.500L12 19.800 6.500 16.500V10ZM6.500 10 12 13.200 17.500 10M12 13.200V19.800" />
  </svg>
);

const M365Icon = () => (
  <svg width="22" height="24">
    <path d="M11 1 4 5Q1 7 1 10V16L7 14V9L14 6V2Q12.500.5 11 1Z" fill="#5a6fc4" />
    <path d="M12 1 19 5Q21 6.500 21 9V15L14 12V6L9 3Z" fill="#62c6e8" />
    <path d="M21 13V17Q20.500 18.500 19 19.500L12 23Q10 23.500 8.500 22.500L3 19 9 17 14 15V11Z" fill="#8c62cf" />
    <path d="M1 11V16Q1 18 3 19L9 17 7 14V9Z" fill="#b9a6e8" />
    <path d="M7.500 10 11 8 14.500 10V14L11 16 7.500 14Z" fill="#1f2225" />
  </svg>
);

const GearIcon = () => (
  <svg width="20" height="20" viewBox="-10 -10 20 20">
    <circle r="5.200" fill="none" stroke="#fff" strokeWidth="2.600" />
    {[0, 45, 90, 135, 180, 225, 270, 315].map((a) => (
      <rect key={a} x="-1.500" y="-9.200" width="3" height="3.600" fill="#fff" transform={`rotate(${a})`} />
    ))}
  </svg>
);

const RobotIcon = () => (
  <svg width="24" height="24">
    <rect width="24" height="24" fill="#20b151" />
    <rect x="3" y="3" width="18" height="18" fill="none" stroke="#fff" strokeWidth="1.800" />
    <path d="M9 7.500 16.500 12 9 16.500Z" fill="#fff" />
  </svg>
);

const TaskViewIcon = () => (
  <svg width="17" height="16" stroke="#fff" fill="none">
    <path d="M.5 0V2.500H11.500V0M.5 15.500V12.500H11.500V15.500M.5 5.500H11.500V10.500H.5ZM14.500 0V4M14.500 8.500V16" />
    <path d="M13 6H16.500" strokeWidth="2.600" />
  </svg>
);

const WeatherIcon = () => (
  <svg width="24" height="16">
    <defs>
      <linearGradient id="cloud" x1="0" x2="0" y1="0" y2="1"><stop offset="0" stopColor="#a9c6f5" /><stop offset="1" stopColor="#dbe8fc" /></linearGradient>
    </defs>
    <path d="M5 16A4.800 4.800 0 0 1 4.500 6.500 7 7 0 0 1 17.500 5.500 5.400 5.400 0 0 1 19 16Z" fill="url(#cloud)" />
    <path d="M14 8Q17 5 20.500 7" stroke="#86aaf0" fill="none" />
  </svg>
);

const Taskbar = () => (
  <Bar>
    <Tile $gap={0}>
      <svg width="16" height="16">
        <path d="M0 2.200 6.500 1.300V7.500H0ZM7.500 1.200 16 0V7.500H7.500ZM0 8.500H6.500V14.700L0 13.800ZM7.500 8.500H16V16L7.500 14.800Z" fill="#fff" />
      </svg>
    </Tile>
    <SearchBox>
      <svg width="17" height="17"><circle cx="10.500" cy="6.500" r="5.300" fill="none" stroke="#1b1b1b" strokeWidth="1.300" /><path d="M6.500 10.500.8 16.200" stroke="#1b1b1b" strokeWidth="1.300" /></svg>
      <SearchHint $ls={-0.5}>Type here to search</SearchHint>
      <BrandChip>
        <svg width="72" height="22">
          <text x="2.500 16 25.500 37.500 50 54.500" y="17.500" fontFamily="Lato" fontSize="18" fill="#fff">NEORIS</text>
        </svg>
      </BrandChip>
    </SearchBox>
    <Tile $gap={3}><TaskViewIcon /></Tile>
    <Tile><EdgeIcon /></Tile>
    <Tile $active><ExplorerTaskIcon /></Tile>
    <Tile><StoreIcon /></Tile>
    <Tile><MailIcon /></Tile>
    <Tile><CubeHexIcon /></Tile>
    <Tile><ChromeIcon size={24} /></Tile>
    <Tile><M365Icon /></Tile>
    <Tile $running><StudioIcon size={24} /></Tile>
    <Tile $running><GearIcon /></Tile>
    <Tile $running><RobotIcon /></Tile>
    <Tray>
      <Weather><WeatherIcon /><Text $ls={-0.56}>53°F</Text></Weather>
      <TrayIcon><svg width="13" height="8"><path d="M1 7 6.500 1.500 12 7" fill="none" stroke="#fff" strokeWidth="1.300" /></svg></TrayIcon>
      <TrayIcon><CloudIcon /></TrayIcon>
      <TrayIcon>
        <svg width="17" height="13" fill="none" stroke="#fff">
          <path d="M7.500 2.500H14.500V10.500H5.500V8M15.500 5V8M2.500 0V2.500M5.500 0V2.500M.5 2.500H7" />
          <rect x="7" y="4" width="6" height="5" fill="#fff" stroke="none" />
          <path d="M1.500 2.500Q1.500 5.500 4 5.500T6.500 2.500M4 5.500V8.500H6" />
        </svg>
      </TrayIcon>
      <TrayIcon>
        <svg width="14" height="13" fill="none" stroke="#e8e8e8">
          <path d="M1 12.500Q1 1 13 1" stroke="#9a9a9a" />
          <path d="M4 12.500Q4 4 13 4" />
          <path d="M7 12.500Q7 7 13 7" />
          <path d="M10 12.500Q10 10 13 10" />
        </svg>
      </TrayIcon>
      <TrayIcon>
        <svg width="16" height="13" fill="none" stroke="#fff">
          <path d="M1.500 4.500H3.500L7 1V12L3.500 8.500H1.500ZM9.500 4 14.500 9M14.500 4 9.500 9" />
        </svg>
      </TrayIcon>
      <Stack $width={30} $before={2}><Text $ls={-0.75}>ENG</Text><Text $ls={-0.6}>ES</Text></Stack>
      <Stack $width={54} $before={8}><Text $ls={-0.32}>9:01 AM</Text><Text $ls={-0.54}>5/21/2023</Text></Stack>
      <Notifications>
        <svg width="27" height="25">
          <path d="M2 0H18V12H10L6 15.500V12H2Z" fill="#fff" />
          <path d="M5 3.500H15M5 6.500H15M5 9.500H11" stroke="#1f2225" />
          <circle cx="17.500" cy="15.500" r="8.500" fill="#3d4043" stroke="#8a8c8e" />
          <text x="17.200" y="19.500" fontSize="11" fontWeight="600" textAnchor="middle" fill="#fff">16</text>
        </svg>
      </Notifications>
      <ShowDesktop />
    </Tray>
  </Bar>
);

export default function App() {
  return (
    <>
      <GlobalStyle />
      <Screen>
        <Wallpaper />
        <DesktopIcons />
        <Taskbar />
        <Explorer />
      </Screen>
    </>
  );
}
